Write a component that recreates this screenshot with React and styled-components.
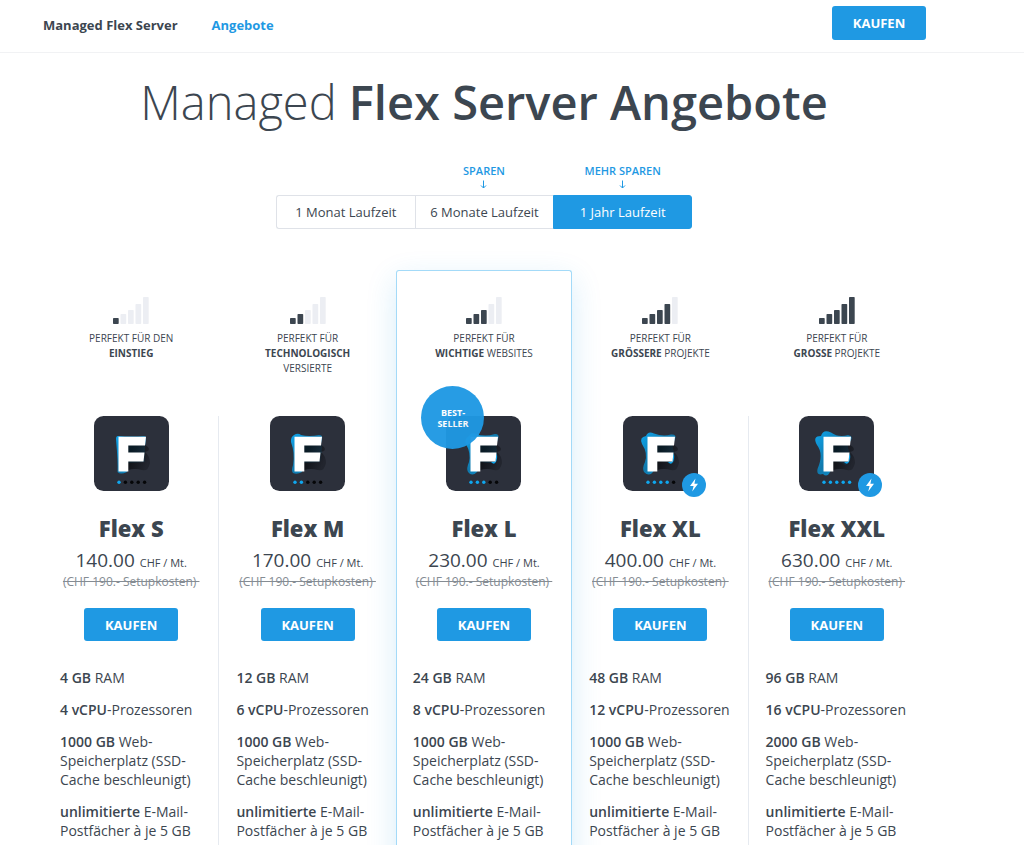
import { useState } from "react";
import styled, { createGlobalStyle } from "styled-components";

const BLUE = "#1f99e3";
const DARK = "#3c4650";

const GlobalStyle = createGlobalStyle`
  * {
    box-sizing: border-box;
  }
  body {
    margin: 0;
    background: #fff;
    color: ${DARK};
    font-family: "Open Sans", "Noto Sans", sans-serif;
    font-size: 14px;
    line-height: 19px;
  }
`;

const Header = styled.header`
  display: flex;
  align-items: flex-start;
  height: 53px;
  padding: 6px 98px 0 43px;
  border-bottom: 1px solid #f1f2f4;
`;

const Nav = styled.nav`
  display: flex;
  flex: 1;
  gap: 34px;
  padding-top: 10px;
`;

const NavLink = styled.a`
  color: ${(props) => (props.$active ? BLUE : DARK)};
  font-size: 13px;
  font-weight: 700;
  text-decoration: none;
`;

const BuyButton = styled.button`
  width: 94px;
  height: ${(props) => (props.$tall ? "34px" : "33px")};
  padding: 0;
  border: none;
  border-radius: 3px;
  background: ${BLUE};
  color: #fff;
  font: 700 13px "Open Sans", sans-serif;
  cursor: pointer;
`;

const Main = styled.main`
  padding: 14px 99px 0 43px;
`;

const Title = styled.h1`
  margin: 0;
  font-size: 47px;
  font-weight: 300;
  line-height: 70px;
  text-align: center;

  strong {
    font-weight: 600;
  }
`;

const Terms = styled.div`
  display: grid;
  grid-template-columns: repeat(3, 1fr);
  width: 416px;
  margin: 26px auto 0;
`;

const Term = styled.div`
  display: flex;
  flex-direction: column;
  justify-content: flex-end;
`;

const Hint = styled.div`
  display: flex;
  flex-direction: column;
  align-items: center;
  gap: 1px;
  height: 32px;
  color: ${BLUE};
  font-size: 11px;
  font-weight: 600;
  line-height: 16px;
`;

const TermButton = styled.button`
  height: 34px;
  padding: 0;
  border: 1px solid ${(props) => (props.$active ? BLUE : "#dfe2e8")};
  border-right-width: ${(props) => (props.$edge === "right" ? "1px" : "0")};
  border-radius: ${(props) =>
    props.$edge === "left" ? "3px 0 0 3px" : props.$edge === "right" ? "0 3px 3px 0" : "0"};
  background: ${(props) => (props.$active ? BLUE : "#fff")};
  color: ${(props) => (props.$active ? "#fff" : DARK)};
  font: 400 13px "Open Sans", sans-serif;
  cursor: pointer;
`;

const Plans = styled.section`
  display: grid;
  grid-template-columns: repeat(5, 1fr);
  margin-top: 41px;
`;

const Plan = styled.article`
  display: flex;
  flex-direction: column;
  position: relative;
  padding-top: 25px;
  border: 1px solid ${(props) => (props.$best ? "#a3daf8" : "transparent")};
  border-bottom: none;
  border-radius: 3px 3px 0 0;
  box-shadow: ${(props) => (props.$best ? "0 10px 30px rgba(31, 153, 227, 0.18)" : "none")};
`;

const Intro = styled.div`
  display: flex;
  flex-direction: column;
  align-items: center;
  height: 120px;
`;

const Target = styled.p`
  margin: 7px 0 0;
  font-size: 10px;
  line-height: 15px;
  text-align: center;
  text-transform: uppercase;
`;

const Body = styled.div`
  flex: 1;
  margin-right: -1px;
  padding-bottom: 60px;
  border-right: 1px solid ${(props) => (props.$divider ? "#e6eaf0" : "transparent")};
`;

const Offer = styled.div`
  display: flex;
  flex-direction: column;
  align-items: center;
`;

const Tile = styled.div`
  position: relative;
  width: 75px;
  height: 75px;
`;

const BestBadge = styled.span`
  display: flex;
  align-items: center;
  justify-content: center;
  position: absolute;
  top: -30px;
  left: -25px;
  width: 63px;
  height: 63px;
  border-radius: 50%;
  background: ${BLUE};
  color: #fff;
  font-size: 9px;
  font-weight: 700;
  line-height: 11px;
  text-align: center;
  opacity: 0.96;
`;

const FlashBadge = styled.span`
  display: flex;
  align-items: center;
  justify-content: center;
  position: absolute;
  right: -8px;
  bottom: -6px;
  width: 24px;
  height: 24px;
  border-radius: 50%;
  background: ${BLUE};
`;

const Name = styled.h2`
  margin: 22px 0 0;
  font-size: 22px;
  font-weight: 800;
  line-height: 30px;
`;

const Price = styled.p`
  margin: 6px 0 0;
  font-size: 19px;
  line-height: 22px;

  small {
    font-size: 11px;
  }
`;

const Setup = styled.p`
  margin: 0 0 18px;
  color: #858c93;
  font-size: 12px;
  line-height: 16px;
  text-decoration: line-through;
  white-space: pre;
`;

const Features = styled.ul`
  display: flex;
  flex-direction: column;
  gap: 13px;
  margin: 27px 0 0;
  padding: 0 16px;
  list-style: none;

  strong {
    font-weight: 600;
  }
`;

const terms = [
  { label: "1 Monat Laufzeit", hint: "", edge: "left" },
  { label: "6 Monate Laufzeit", hint: "SPAREN" },
  { label: "1 Jahr Laufzeit", hint: "MEHR SPAREN", edge: "right" },
];

const plans = [
  {
    name: "Flex S",
    price: "140.00",
    target: <>Perfekt für den<br /><strong>Einstieg</strong></>,
    ram: "4 GB",
    cpu: "4 vCPU",
    disk: "1000 GB",
    divider: true,
  },
  {
    name: "Flex M",
    price: "170.00",
    target: <>Perfekt für<br /><strong>technologisch</strong><br />versierte</>,
    ram: "12 GB",
    cpu: "6 vCPU",
    disk: "1000 GB",
  },
  {
    name: "Flex L",
    price: "230.00",
    target: <>Perfekt für<br /><strong>wichtige</strong> Websites</>,
    ram: "24 GB",
    cpu: "8 vCPU",
    disk: "1000 GB",
    best: true,
  },
  {
    name: "Flex XL",
    price: "400.00",
    target: <>Perfekt für<br /><strong>grössere</strong> Projekte</>,
    ram: "48 GB",
    cpu: "12 vCPU",
    disk: "1000 GB",
    flash: true,
    divider: true,
  },
  {
    name: "Flex XXL",
    price: "630.00",
    target: <>Perfekt für<br /><strong>grosse</strong> Projekte</>,
    ram: "96 GB",
    cpu: "16 vCPU",
    disk: "2000 GB",
    flash: true,
  },
];

// blue shape behind the F, grows with the plan
const blobs = [
  "M24 20Q38 21 50 20Q52.500 20 52 23L51 30L50.500 46L34 47L33 56Q26 59 23.500 56Q24 46 22 23Q22 20 24 20Z",
  "M24 19Q28 16.500 31 19Q39 21 49 19Q53 19 52 23Q50 28 52 31L50 46L34 47L32 56Q27 59 23 57Q21 55 23 49Q25 37 21 26Q20.500 21 24 19Z",
  "M23 20Q25 16 30 18Q39 21 49 18Q54 18 52 23Q49 29 51 34L50 46Q43 48 35 46L31 56Q26 61 22 56Q20 53 23 46Q25 37 20 28Q18 23 23 20Z",
  "M23 20Q25 14.500 31 17.500Q40 21 48 18.500Q54 18 52 23Q48 30 51 36Q53 43 51 46Q48 50 44 46L35 45L30 56Q26 61 21 56Q19 52 22 46Q25 37 19 28Q16 21 23 20Z",
  "M22 20Q24 13 32 16.500Q40 22 49 19Q54 20 52 24Q47 30 50 35Q54 41 50 46Q47 51 43 47L35 45L31 56Q28 62 24 58Q17 60 18.500 53Q25 38 18 29Q13 20 22 20Z",
];

function Bars({ level }) {
  const heights = [6, 10, 14, 20, 27];
  return (
    <svg width="36" height="28" viewBox="0 0 36 28" aria-hidden="true">
      {heights.map((h, i) => (
        <rect
          key={h}
          x={i * 7.5}
          y={28 - h}
          width="5.7"
          height={h}
          rx="0.7"
          fill={i < level ? DARK : "#eceef3"}
        />
      ))}
    </svg>
  );
}

function Logo({ level }) {
  const id = `shade${level}`;
  return (
    <svg width="75" height="75" viewBox="0 0 75 75" aria-hidden="true">
      <defs>
        <linearGradient id={id} x1="0" y1="0" x2="1" y2="0.5">
          <stop offset="0.2" stopColor="#080a0d" />
          <stop offset="1" stopColor="#20232c" />
        </linearGradient>
        <linearGradient id={`${id}b`} x1="0" y1="0" x2="1" y2="1">
          <stop offset="0" stopColor="#0fa4eb" />
          <stop offset="0.5" stopColor="#1179ac" />
          <stop offset="1" stopColor="#0ba5ed" />
        </linearGradient>
      </defs>
      <rect width="75" height="75" rx="9.5" fill="#2c303b" />
      <path d={blobs[level - 1]} fill={`url(#${id}b)`} />
      <path
        d="M34 29H51L54 31Q57 35 51 36Q56 40 56 47Q54 56 48 54Q41 52 34 54Z"
        fill={`url(#${id})`}
        opacity="0.85"
      />
      {level > 2 && <path d="M49 45.500L50.700 37Q52 43 49.500 46.500Q48 49 45 46Z" fill="#0ba5ed" />}
      <path d="M24.500 20.700H52L51 29.500H34.300V36.500H50.500L49.500 45.500H34.300V55.500H24.500Z" fill="#fff" />
      {[0, 1, 2, 3, 4].map((i) => (
        <circle key={i} cx={25 + i * 6.4} cy="66.300" r="1.700" fill={i < level ? "#0fa7ef" : "#050608"} />
      ))}
    </svg>
  );
}

function PlanColumn({ plan, level }) {
  return (
    <Plan $best={plan.best}>
      <Intro>
        <Bars level={level} />
        <Target>{plan.target}</Target>
      </Intro>
      <Body $divider={plan.divider}>
        <Offer>
          <Tile>
            <Logo level={level} />
            {plan.best && <BestBadge>BEST-<br />SELLER</BestBadge>}
            {plan.flash && (
              <FlashBadge>
                <svg width="10" height="14" viewBox="0 0 10 14" aria-hidden="true">
                  <path d="M6.500 0.500L1 8H4.600L3.200 13.500L9 5.700H5.400Z" fill="#fff" />
                </svg>
              </FlashBadge>
            )}
          </Tile>
          <Name>{plan.name}</Name>
          <Price>
            {plan.price} <small>CHF / Mt.</small>
          </Price>
          <Setup>{"(CHF 190.- Setupkosten) "}</Setup>
          <BuyButton type="button">KAUFEN</BuyButton>
        </Offer>
        <Features>
          <li><strong>{plan.ram}</strong> RAM</li>
          <li><strong>{plan.cpu}</strong>-Prozessoren</li>
          <li><strong>{plan.disk}</strong> Web-Speicherplatz (SSD-Cache beschleunigt)</li>
          <li><strong>unlimitierte</strong> E-Mail-Postfächer à je 5 GB</li>
        </Features>
      </Body>
    </Plan>
  );
}

function App() {
  const [term, setTerm] = useState(2);

  return (
    <>
      <GlobalStyle />
      <Header>
        <Nav>
          <NavLink href="#server">Managed Flex Server</NavLink>
          <NavLink href="#angebote" $active>Angebote</NavLink>
        </Nav>
        <BuyButton type="button" $tall>KAUFEN</BuyButton>
      </Header>
      <Main>
        <Title>
          Managed <strong>Flex Server Angebote</strong>
        </Title>
        <Terms>
          {terms.map((item, i) => (
            <Term key={item.label}>
              {item.hint && (
                <Hint>
                  <span>{item.hint}</span>
                  <svg width="7" height="9" viewBox="0 0 7 9" fill="none" stroke={BLUE} aria-hidden="true">
                    <path d="M3.500 0.500V8M1 5.500L3.500 8L6 5.500" />
                  </svg>
                </Hint>
              )}
              <TermButton
                type="button"
                $active={term === i}
                $edge={item.edge}
                aria-pressed={term === i}
                onClick={() => setTerm(i)}
              >
                {item.label}
              </TermButton>
            </Term>
          ))}
        </Terms>
        <Plans>
          {plans.map((plan, i) => (
            <PlanColumn key={plan.name} plan={plan} level={i + 1} />
          ))}
        </Plans>
      </Main>
    </>
  );
}

export default App;
